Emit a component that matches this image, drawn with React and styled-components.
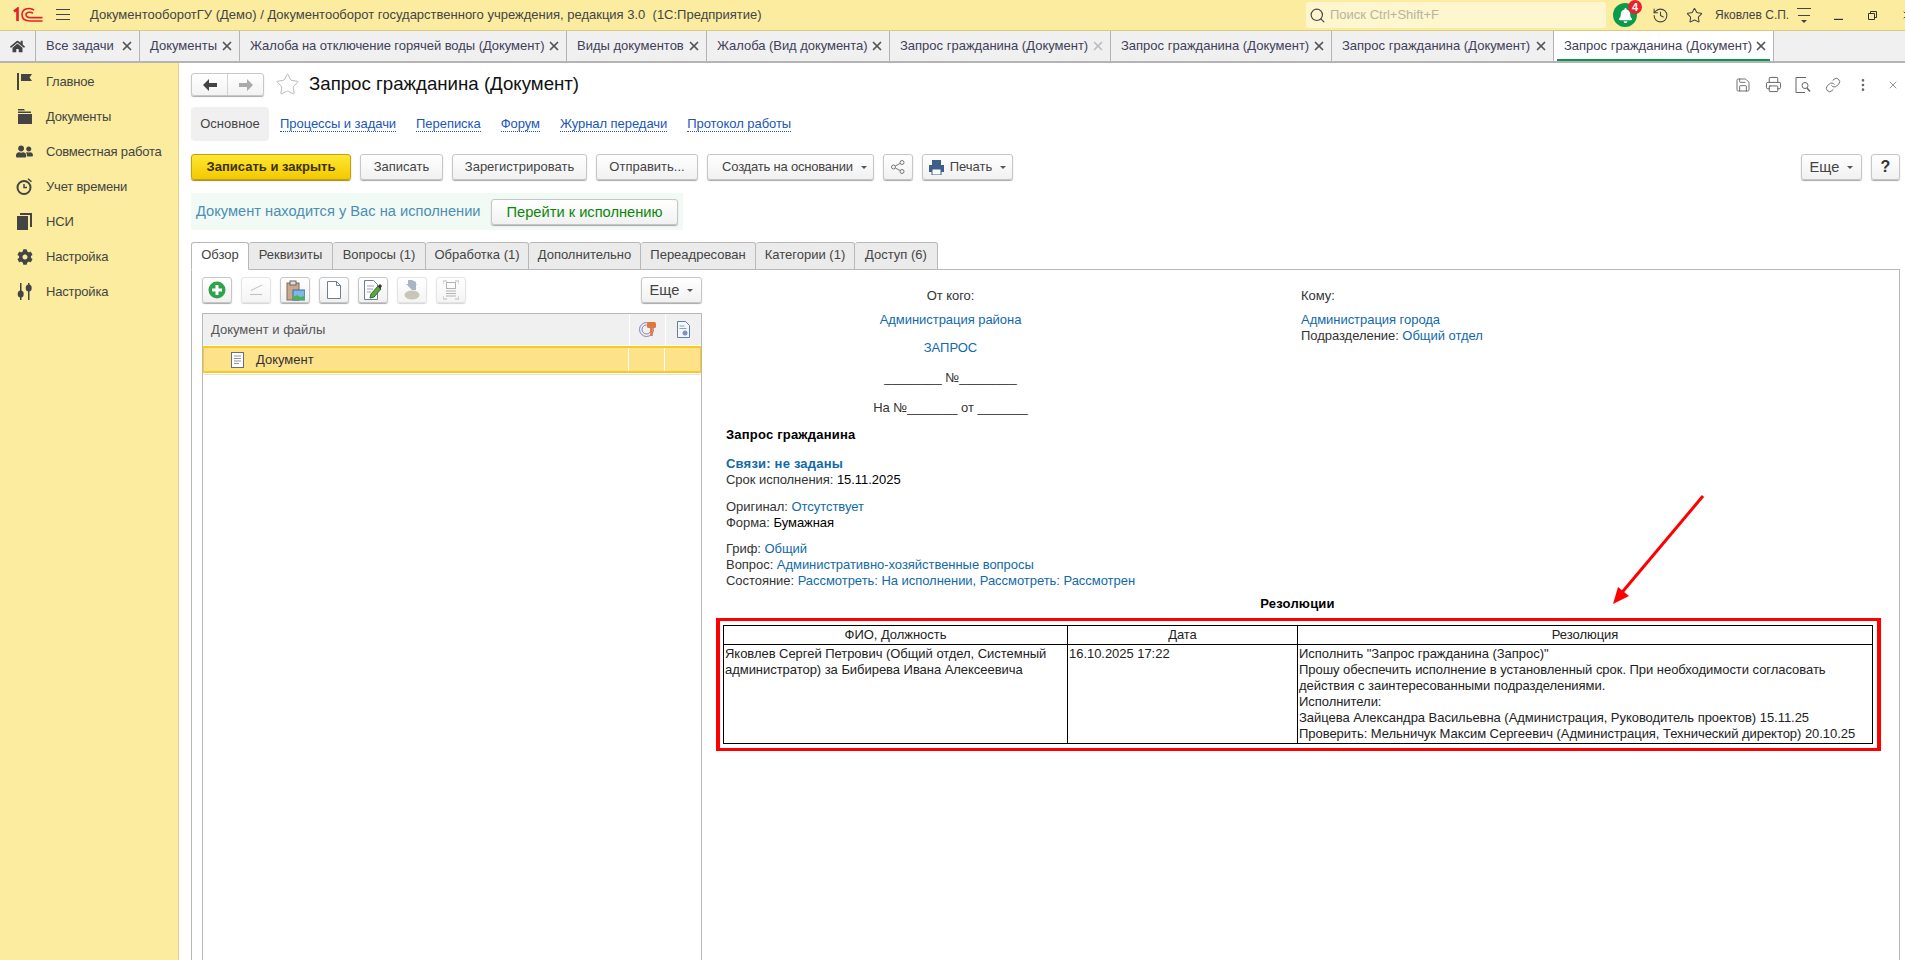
import React from "react";
import styled, { createGlobalStyle } from "styled-components";
import { Search, History, Star, Save, Printer, Link, MoreVertical, X } from "lucide-react";
import { FaHome, FaUserFriends, FaCog, FaBell } from "react-icons/fa";

const GlobalStyle = createGlobalStyle`
  html, body {
    margin: 0;
    height: 100%;
    overflow: hidden;
    background: #fff;
  }
  body {
    font-family: "Liberation Sans", Arial, sans-serif;
    font-size: 13px;
    line-height: 16px;
    color: #333;
  }
  * { box-sizing: border-box; }
`;

const Page = styled.div`
  width: 1905px;
  height: 960px;
  display: flex;
  flex-direction: column;
  overflow: hidden;
`;

/* title bar */
const TitleBar = styled.div`
  height: 31px;
  flex: none;
  display: flex;
  align-items: center;
  background: #fbec9f;
  border-bottom: 1px solid #d9cb83;
`;
const TitleSlot = styled.div`
  flex: none;
  display: flex;
  align-items: center;
  justify-content: center;
  margin-left: ${(p) => p.$ml}px;
  width: ${(p) => p.$w}px;
  color: #444;
`;
const AppTitle = styled.div`
  margin-left: 20px;
  width: 1216px;
  flex: none;
  white-space: pre;
  color: #444;
`;
const SearchBox = styled.div`
  flex: none;
  width: 300px;
  height: 26px;
  display: flex;
  align-items: center;
  gap: 4px;
  padding-left: 3px;
  background: #fdf6cf;
  border-radius: 3px;
  color: #b9b49c;
  svg { color: #444; }
`;
const BellCircle = styled.div`
  position: relative;
  width: 24px;
  height: 24px;
  border-radius: 50%;
  background: #0a9a4c;
  display: flex;
  align-items: center;
  justify-content: center;
  color: #fff;
`;
const BellBadge = styled.span`
  position: absolute;
  top: -3px;
  right: -5px;
  width: 14px;
  height: 14px;
  border-radius: 50%;
  background: #e9212c;
  color: #fff;
  font-size: 11px;
  font-weight: 700;
  line-height: 14px;
  text-align: center;
`;
const UserName = styled.div`
  margin-left: 12px;
  width: 68px;
  flex: none;
  font-size: 12px;
  white-space: nowrap;
  color: #444;
`;

/* open windows tabs */
const TabBar = styled.div`
  height: 32px;
  flex: none;
  display: flex;
  background: #f0f0f0;
  border-bottom: 2px solid #b4b4b4;
`;
const WindowTab = styled.div`
  flex: none;
  width: ${(p) => p.$w}px;
  display: flex;
  align-items: center;
  justify-content: space-between;
  padding: 0 5px 0 10px;
  position: relative;
  border-right: 1px solid #b4b4b4;
  white-space: nowrap;
  color: #40405a;
  background: ${(p) => (p.$active ? "#fff" : "transparent")};
  &::after {
    content: "";
    display: ${(p) => (p.$active ? "block" : "none")};
    position: absolute;
    left: 3px;
    right: 3px;
    bottom: 0;
    height: 2px;
    background: #0a9650;
  }
`;
const HomeTab = styled(WindowTab)`
  justify-content: center;
  padding: 0;
  color: #444;
`;
const TabTitle = styled.span`
  letter-spacing: ${(p) => (p.$long ? "-0.05px" : "0")};
`;
const TabClose = styled(X)`
  flex: none;
  color: ${(p) => (p.$dim ? "#bdbdbd" : "#555")};
`;

/* layout */
const Body = styled.div`
  flex: 1;
  min-height: 0;
  display: flex;
`;
const Sidebar = styled.nav`
  width: 179px;
  flex: none;
  padding-top: 1px;
  background: #fbec9f;
  border-right: 1px solid #e0d286;
`;
const SideItem = styled.div`
  height: 35px;
  display: flex;
  align-items: center;
  gap: 13px;
  padding-left: 16px;
  color: #444;
  letter-spacing: -0.2px;
  white-space: nowrap;
`;
const SideIcon = styled.span`
  width: 17px;
  height: 17px;
  display: flex;
  align-items: center;
  justify-content: center;
  color: #444;
`;
const Main = styled.main`
  flex: 1;
  min-width: 0;
  display: flex;
  flex-direction: column;
  padding: 10px 5px 0 12px;
`;

/* form head */
const FormHead = styled.div`
  height: 23px;
  flex: none;
  display: flex;
  align-items: center;
`;
const NavGroup = styled.div`
  width: 73px;
  height: 23px;
  display: flex;
  background: linear-gradient(#fff, #f3f3f3);
  border: 1px solid #c8c8c8;
  border-radius: 3px;
  box-shadow: 0 1px 1px #aaa;
`;
const NavButton = styled.div`
  flex: 1;
  display: flex;
  align-items: center;
  justify-content: center;
  color: ${(p) => (p.$off ? "#aaa" : "#444")};
  & + & { border-left: 1px solid #d4d4d4; }
`;
const FormTitle = styled.h1`
  margin: 0 0 2px 9px;
  font-size: 18.67px;
  font-weight: 400;
  line-height: 24px;
  color: #111;
  white-space: nowrap;
`;
const FormTools = styled.div`
  margin-left: auto;
  margin-right: -8px;
  display: flex;
  align-items: center;
  color: #666;
`;
const FormTool = styled.span`
  width: ${(p) => p.$w}px;
  display: flex;
  justify-content: center;
`;

/* sub navigation */
const SubNav = styled.div`
  height: 34px;
  margin-top: 11px;
  flex: none;
  display: flex;
  align-items: center;
  gap: 20px;
`;
const SubCurrent = styled.div`
  width: 78px;
  height: 34px;
  margin-right: -9px;
  display: flex;
  align-items: center;
  justify-content: center;
  background: #f0f0f0;
  border-radius: 4px;
  color: #444;
`;
const SubLink = styled.a`
  color: #1c55b8;
  border-bottom: 1px dotted #1c55b8;
  line-height: 14px;
  letter-spacing: -0.05px;
  white-space: nowrap;
`;

/* command bar */
const CommandBar = styled.div`
  height: 26px;
  margin-top: 13px;
  flex: none;
  display: flex;
  gap: 9px;
`;
const Button = styled.div`
  flex: none;
  width: ${(p) => p.$w}px;
  height: 26px;
  display: flex;
  align-items: center;
  justify-content: center;
  gap: 6px;
  background: linear-gradient(#fff, #f1f1f1);
  border: 1px solid #c6c6c6;
  border-radius: 3px;
  box-shadow: 0 1px 1px #a8a8a8;
  color: #444;
  white-space: nowrap;
  ${(p) => (p.$push ? "margin-left: auto;" : "")}
`;
const PrimaryButton = styled(Button)`
  background: linear-gradient(#ffe733, #f4c900);
  border-color: #c2a20c;
  box-shadow: 0 1px 1px #9c8a28;
  color: #3b3200;
  font-weight: 700;
`;
const TightButton = styled(Button)`
  padding-left: 8px;
  letter-spacing: -0.2px;
`;
const MoreButton = styled(Button)`
  font-size: 14.67px;
`;
const HelpButton = styled(Button)`
  font-size: 16px;
  font-weight: 700;
  color: #333;
`;
const Caret = styled.span`
  width: 0;
  height: 0;
  margin-left: 2px;
  border-left: 3px solid transparent;
  border-right: 3px solid transparent;
  border-top: 3px solid #555;
`;

/* info strip */
const InfoStrip = styled.div`
  width: 492px;
  height: 37px;
  margin-top: 13px;
  flex: none;
  display: flex;
  align-items: center;
  padding-left: 5px;
  background: #f2faf6;
`;
const InfoText = styled.span`
  width: 295px;
  flex: none;
  margin-top: -2px;
  font-size: 14.67px;
  color: #4b8fb3;
  white-space: nowrap;
`;
const GoButton = styled(Button)`
  height: 26px;
  font-size: 14.67px;
  color: #0a870a;
`;

/* form tabs */
const FormTabs = styled.div`
  height: 28px;
  margin-top: 12px;
  flex: none;
  display: flex;
  position: relative;
  z-index: 1;
  margin-bottom: -1px;
`;
const FormTab = styled.div`
  flex: none;
  width: ${(p) => p.$w}px;
  display: flex;
  align-items: center;
  justify-content: center;
  padding-bottom: 2px;
  color: #444;
  background: ${(p) => (p.$active ? "#fff" : "#ebebeb")};
  border: 1px solid #b8b8b8;
  border-left-width: ${(p) => (p.$active ? 1 : 0)}px;
  border-bottom-color: ${(p) => (p.$active ? "#fff" : "#b8b8b8")};
  border-radius: 3px 3px 0 0;
`;
const Panel = styled.div`
  flex: 1;
  min-height: 0;
  display: flex;
  border: 1px solid #b8b8b8;
  border-bottom: 0;
`;

/* left column */
const LeftColumn = styled.div`
  width: 510px;
  flex: none;
  display: flex;
  flex-direction: column;
  padding: 7px 0 0 10px;
`;
const Toolbar = styled.div`
  height: 26px;
  flex: none;
  display: flex;
  gap: 9px;
`;
const ToolButton = styled(Button)`
  width: 30px;
  ${(p) => (p.$off ? "opacity: .75; box-shadow: 0 1px 1px #c8c8c8; border-color: #dcdcdc;" : "")}
`;
const Grid = styled.div`
  flex: 1;
  margin-top: 10px;
  border: 1px solid #b8b8b8;
  border-bottom: 0;
`;
const GridRow = styled.div`
  display: grid;
  grid-template-columns: 1fr 36px 36px;
`;
const HeadCell = styled.div`
  height: 31px;
  display: flex;
  align-items: center;
  justify-content: ${(p) => (p.$icon ? "center" : "flex-start")};
  padding-left: ${(p) => (p.$icon ? 0 : 8)}px;
  background: #f0f0f0;
  color: #555;
  border-left: ${(p) => (p.$icon ? "1px solid #fff" : "0")};
`;
const SelectedRow = styled(GridRow)`
  height: 27px;
  margin-top: 1px;
  background: #fde28a;
  border: 2px solid #f8c91e;
  border-left-width: 1px;
  border-right-width: 1px;
`;
const SelectedCell = styled.div`
  display: flex;
  align-items: center;
  gap: 11px;
  padding-left: 27px;
  color: #333;
  & + & {
    padding: 0;
    border-left: 1px solid #fff;
  }
`;
const RowRule = styled.div`
  height: 1px;
  margin-top: 1px;
  background: #e4e4e4;
`;

/* printed document */
const DocView = styled.div`
  flex: 1;
  min-width: 0;
  padding: 18px 0 0 24px;
  color: #333;
  letter-spacing: -0.04px;
`;
const Addressing = styled.div`
  display: grid;
  grid-template-columns: 449px 1fr;
  column-gap: 126px;
`;
const FromBlock = styled.div`
  text-align: center;
`;
const Line = styled.div`
  margin-top: ${(p) => p.$mt || 0}px;
  white-space: pre;
`;
const Blue = styled.span`
  color: #116aa8;
`;
const Value = styled.span`
  color: #000;
`;
const BoldLine = styled(Line)`
  font-weight: 700;
  color: #000;
  letter-spacing: 0.2px;
`;
const DocHeading = styled(BoldLine)`
  text-align: center;
  width: 1149px;
  margin-left: -3px;
`;
const ResolutionFrame = styled.div`
  margin: 6px 18px 0 -10px;
  padding: 4px 4px 4px 3px;
  border: solid #f00;
  border-width: 3px 4px;
`;
const Table = styled.table`
  width: 100%;
  table-layout: fixed;
  border-collapse: collapse;
  th, td {
    border: 1px solid #000;
    padding: 1px;
    vertical-align: top;
    font-weight: 400;
    color: #222;
  }
`;
const ArrowMark = styled.svg`
  position: absolute;
  left: 1605px;
  top: 490px;
`;

/* drawn icons */
const Logo = () => (
  <svg width="30" height="16" viewBox="0 0 30 16" fill="none" stroke="#e4202a">
    <path d="M1 4.5 4.5 1.8V14" strokeWidth="2.6" />
    <path d="M21 3.2C18 .4 9 .6 9 7.5c0 5 4 6.5 8 6.5h12.5" strokeWidth="1.6" />
    <path d="M20 6.4c-2-1.8-7-1.6-7 1.4 0 2.4 2.5 2.8 5 2.8h11.5" strokeWidth="1.6" />
  </svg>
);
const Burger = () => (
  <svg width="14" height="12" viewBox="0 0 14 12" stroke="#444" strokeWidth="1">
    <path d="M0 .5h14M0 5.5h14M0 10.5h14" />
  </svg>
);
const MenuLines = () => (
  <svg width="14" height="15" viewBox="0 0 14 15">
    <path d="M0 .5h14M1 7.5h12" stroke="#444" />
    <path d="M4 12h6l-3 3z" fill="#444" />
  </svg>
);
const Minimize = () => (
  <svg width="9" height="9" viewBox="0 0 9 9"><path d="M0 8.5h9" stroke="#333" strokeWidth="1.4" /></svg>
);
const Restore = () => (
  <svg width="9" height="9" viewBox="0 0 9 9" fill="none" stroke="#333">
    <path d="M.5 2.5h6v6h-6zM2.5 2.5v-2h6v6h-2" />
  </svg>
);
const FlagIcon = () => (
  <svg width="15" height="17" viewBox="0 0 15 17" fill="#444">
    <rect x="0" width="2" height="17" />
    <path d="M4 1h11l-2.5 3.5L15 8H4z" />
  </svg>
);
const FolderIcon = () => (
  <svg width="15" height="15" viewBox="0 0 15 15" fill="#444">
    <path d="M1 0h6l1 1.5H1zM1 2.500h13V4H1zM1 5h14v10H1z" />
  </svg>
);
const StopwatchIcon = () => (
  <svg width="17" height="17" viewBox="0 0 17 17" fill="none" stroke="#444">
    <circle cx="8" cy="9.500" r="6.500" strokeWidth="2" />
    <path d="M8 6v3.500h3M12 .8l3.500 3" strokeWidth="1.500" />
  </svg>
);
const StackIcon = () => (
  <svg width="15" height="17" viewBox="0 0 15 17" fill="#444">
    <rect x="0" y="3" width="11" height="14" />
    <path d="M3 0h12v14h-2V2H3z" />
  </svg>
);
const SlidersIcon = () => (
  <svg width="15" height="17" viewBox="0 0 15 17" fill="#444">
    <rect x="3" width="1.500" height="17" />
    <rect x="11" width="1.500" height="17" />
    <ellipse cx="3.700" cy="11" rx="3" ry="3.500" />
    <ellipse cx="11.700" cy="5" rx="3" ry="3.500" />
  </svg>
);
const ArrowLeft = () => (
  <svg width="14" height="12" viewBox="0 0 14 12" fill="currentColor"><path d="M6 0v4h8v4H6v4L0 6z" /></svg>
);
const ArrowRight = () => (
  <svg width="14" height="12" viewBox="0 0 14 12" fill="currentColor"><path d="M8 0v4H0v4h8v4l6-6z" /></svg>
);
const ShareIcon = () => (
  <svg width="14" height="14" viewBox="0 0 14 14" fill="none" stroke="#777">
    <circle cx="2.500" cy="7" r="2" />
    <circle cx="11" cy="2.500" r="2" />
    <circle cx="11" cy="11.500" r="2" />
    <path d="M4.300 6 9.200 3.400M4.300 8l4.900 2.600" />
  </svg>
);
const PrintIcon = () => (
  <svg width="15" height="15" viewBox="0 0 15 15">
    <path d="M3 0h9v5H3zM0 5h15v7H0z" fill="#3d5f8a" />
    <path d="M3 9h9v6H3z" fill="#fff" stroke="#3d5f8a" />
  </svg>
);
const PreviewIcon = () => (
  <svg width="16" height="16" viewBox="0 0 16 16" fill="none" stroke="#666">
    <path d="M11 .5H1v15h9" />
    <circle cx="10" cy="8.500" r="3" />
    <path d="m12 11 3 3.500" strokeWidth="1.500" />
  </svg>
);
const AddIcon = () => (
  <svg width="18" height="18" viewBox="0 0 18 18">
    <circle cx="9" cy="9" r="8.500" fill="#2fa24a" />
    <path d="M9 4v10M4 9h10" stroke="#fff" strokeWidth="3" />
  </svg>
);
const LessIcon = () => (
  <svg width="14" height="12" viewBox="0 0 14 12" fill="none" stroke="#aaa">
    <path d="M13 1 2 6.500l0 0M1 10.500h12" />
  </svg>
);
const ClipIcon = () => (
  <svg width="19" height="21" viewBox="0 0 19 21">
    <rect x="1" y="3" width="12" height="17" fill="#c9a88c" stroke="#7d6a58" />
    <rect x="4" y="1" width="6" height="4" fill="#ddd" stroke="#666" />
    <rect x="7" y="10" width="12" height="10" fill="#7db8e8" stroke="#3d6d99" />
    <path d="M7 20v-3l4-2 3 2 5-1v4z" fill="#4fae58" />
  </svg>
);
const PageIcon = () => (
  <svg width="14" height="18" viewBox="0 0 14 18" fill="#fff" stroke="#6f7f92">
    <path d="M.5.500h9l4 4v13H.5z" />
    <path d="M9.500.500v4h4" fill="none" />
  </svg>
);
const EditIcon = () => (
  <svg width="18" height="20" viewBox="0 0 18 20">
    <path d="M.5.500h9l4 4v15H.5z" fill="#fff" stroke="#6f7f92" />
    <path d="M3 6h7M3 9h6M3 12h4" stroke="#9aa5b2" />
    <path d="m6 18 1-4 7-8 3 3-7 8z" fill="#59a83f" stroke="#2f6b22" />
    <path d="m14 6 2-2 2 2-2 3z" fill="#333" />
  </svg>
);
const StampIcon = () => (
  <svg width="16" height="20" viewBox="0 0 16 20">
    <ellipse cx="8" cy="15" rx="7.500" ry="4.500" fill="#b8b3a2" />
    <path d="M4 0h4l4 2v8H8L4 6z" fill="#8d9db0" />
    <path d="M2 4h11L8 9z" fill="#8d9db0" />
  </svg>
);
const ScanIcon = () => (
  <svg width="16" height="20" viewBox="0 0 16 20" fill="none" stroke="#999">
    <path d="M0 4V1h4M12 1h4v3M0 16v3h4M12 19h4v-3" stroke="#b99" />
    <rect x="3.500" y="2.500" width="9" height="6" />
    <path d="M3 11h10M3 13.500h10M3 16h10" />
  </svg>
);
const KeyColumnIcon = () => (
  <svg width="17" height="17" viewBox="0 0 17 17" fill="none">
    <circle cx="7.500" cy="8.500" r="7" stroke="#8a7fb8" />
    <circle cx="7.500" cy="8.500" r="4.500" stroke="#8a7fb8" />
    <rect x="8" y="1" width="9" height="6" rx="1.500" fill="#e2773a" />
    <path d="M12.500 6v9" stroke="#e2773a" strokeWidth="2.500" />
  </svg>
);
const SealColumnIcon = () => (
  <svg width="13" height="17" viewBox="0 0 13 17">
    <path d="M.5.500h8l4 4v12H.5z" fill="#f4f8fd" stroke="#5f7fa8" />
    <path d="M2.500 5h5M2.500 7.500h7" stroke="#8aa2c2" />
    <circle cx="8" cy="12" r="2.500" fill="#7f8fc8" />
  </svg>
);
const ListDocIcon = () => (
  <svg width="14" height="16" viewBox="0 0 14 16" fill="#fff" stroke="#66707c">
    <rect x=".5" y=".5" width="12" height="15" />
    <path d="M3 4h7M3 6.500h7M3 9h7M3 11.500h5" fill="none" stroke="#8d96a0" />
  </svg>
);

const windowTabs = [
  { title: "Все задачи", w: 104 },
  { title: "Документы", w: 100 },
  { title: "Жалоба на отключение горячей воды (Документ)", w: 327, long: true },
  { title: "Виды документов", w: 140 },
  { title: "Жалоба (Вид документа)", w: 183, long: true },
  { title: "Запрос гражданина (Документ)", w: 221, dim: true },
  { title: "Запрос гражданина (Документ)", w: 221 },
  { title: "Запрос гражданина (Документ)", w: 222 },
  { title: "Запрос гражданина (Документ)", w: 220, active: true },
];

const sideItems = [
  { title: "Главное", icon: <FlagIcon /> },
  { title: "Документы", icon: <FolderIcon /> },
  { title: "Совместная работа", icon: <FaUserFriends size={17} /> },
  { title: "Учет времени", icon: <StopwatchIcon /> },
  { title: "НСИ", icon: <StackIcon /> },
  { title: "Настройка", icon: <FaCog size={16} /> },
  { title: "Настройка", icon: <SlidersIcon /> },
];

const subLinks = ["Процессы и задачи", "Переписка", "Форум", "Журнал передачи", "Протокол работы"];

const formTabs = [
  { title: "Обзор", w: 58, active: true },
  { title: "Реквизиты", w: 84 },
  { title: "Вопросы (1)", w: 93 },
  { title: "Обработка (1)", w: 103 },
  { title: "Дополнительно", w: 112 },
  { title: "Переадресован", w: 115 },
  { title: "Категории (1)", w: 99 },
  { title: "Доступ (6)", w: 83 },
];

const App = () => (
  <Page>
    <GlobalStyle />
    <TitleBar>
      <TitleSlot $ml={13} $w={30}><Logo /></TitleSlot>
      <TitleSlot $ml={13} $w={14}><Burger /></TitleSlot>
      <AppTitle>ДокументооборотГУ (Демо) / Документооборот государственного учреждения, редакция 3.0  (1С:Предприятие)</AppTitle>
      <SearchBox><Search size={17} strokeWidth={1.6} />Поиск Ctrl+Shift+F</SearchBox>
      <TitleSlot $ml={7} $w={24}>
        <BellCircle>
          <FaBell size={15} />
          <BellBadge>4</BellBadge>
        </BellCircle>
      </TitleSlot>
      <TitleSlot $ml={15} $w={17}><History size={17} strokeWidth={1.5} /></TitleSlot>
      <TitleSlot $ml={17} $w={17}><Star size={17} strokeWidth={1.5} /></TitleSlot>
      <UserName>Яковлев С.П.</UserName>
      <TitleSlot $ml={14} $w={14}><MenuLines /></TitleSlot>
      <TitleSlot $ml={23} $w={9}><Minimize /></TitleSlot>
      <TitleSlot $ml={25} $w={9}><Restore /></TitleSlot>
      <TitleSlot $ml={24} $w={12}><X size={12} /></TitleSlot>
    </TitleBar>

    <TabBar>
      <HomeTab $w={36}><FaHome size={15} /></HomeTab>
      {windowTabs.map((tab, idx) => (
        <WindowTab key={idx} $w={tab.w} $active={tab.active}>
          <TabTitle $long={tab.long}>{tab.title}</TabTitle>
          <TabClose size={14} strokeWidth={3} $dim={tab.dim} />
        </WindowTab>
      ))}
    </TabBar>

    <Body>
      <Sidebar>
        {sideItems.map((item, idx) => (
          <SideItem key={idx}>
            <SideIcon>{item.icon}</SideIcon>
            {item.title}
          </SideItem>
        ))}
      </Sidebar>

      <Main>
        <FormHead>
          <NavGroup>
            <NavButton><ArrowLeft /></NavButton>
            <NavButton $off><ArrowRight /></NavButton>
          </NavGroup>
          <TitleSlot $ml={11} $w={25}><Star size={25} strokeWidth={0.9} color="#b5b5b5" /></TitleSlot>
          <FormTitle>Запрос гражданина (Документ)</FormTitle>
          <FormTools>
            <FormTool $w={30}><Save size={16} strokeWidth={1.4} /></FormTool>
            <FormTool $w={30}><Printer size={17} strokeWidth={1.4} /></FormTool>
            <FormTool $w={30}><PreviewIcon /></FormTool>
            <FormTool $w={30}><Link size={16} strokeWidth={1.4} /></FormTool>
            <FormTool $w={30}><MoreVertical size={16} strokeWidth={2} /></FormTool>
            <FormTool $w={30}><X size={12} strokeWidth={1.4} /></FormTool>
          </FormTools>
        </FormHead>

        <SubNav>
          <SubCurrent>Основное</SubCurrent>
          {subLinks.map((title) => (
            <SubLink key={title}>{title}</SubLink>
          ))}
        </SubNav>

        <CommandBar>
          <PrimaryButton $w={160}>Записать и закрыть</PrimaryButton>
          <Button $w={83}>Записать</Button>
          <Button $w={135}>Зарегистрировать</Button>
          <Button $w={102}>Отправить...</Button>
          <TightButton $w={167}>Создать на основании<Caret /></TightButton>
          <Button $w={30}><ShareIcon /></Button>
          <Button $w={91}><PrintIcon />Печать<Caret /></Button>
          <MoreButton $w={61} $push>Еще<Caret /></MoreButton>
          <HelpButton $w={29}>?</HelpButton>
        </CommandBar>

        <InfoStrip>
          <InfoText>Документ находится у Вас на исполнении</InfoText>
          <GoButton $w={187}>Перейти к исполнению</GoButton>
        </InfoStrip>

        <FormTabs>
          {formTabs.map((tab) => (
            <FormTab key={tab.title} $w={tab.w} $active={tab.active}>{tab.title}</FormTab>
          ))}
        </FormTabs>

        <Panel>
          <LeftColumn>
            <Toolbar>
              <ToolButton><AddIcon /></ToolButton>
              <ToolButton $off><LessIcon /></ToolButton>
              <ToolButton><ClipIcon /></ToolButton>
              <ToolButton><PageIcon /></ToolButton>
              <ToolButton><EditIcon /></ToolButton>
              <ToolButton $off><StampIcon /></ToolButton>
              <ToolButton $off><ScanIcon /></ToolButton>
              <MoreButton $w={61} $push>Еще<Caret /></MoreButton>
            </Toolbar>
            <Grid>
              <GridRow>
                <HeadCell>Документ и файлы</HeadCell>
                <HeadCell $icon><KeyColumnIcon /></HeadCell>
                <HeadCell $icon><SealColumnIcon /></HeadCell>
              </GridRow>
              <SelectedRow>
                <SelectedCell><ListDocIcon />Документ</SelectedCell>
                <SelectedCell />
                <SelectedCell />
              </SelectedRow>
              <RowRule />
            </Grid>
          </LeftColumn>

          <DocView>
            <Addressing>
              <FromBlock>
                <Line>От кого:</Line>
                <Line $mt={8}><Blue>Администрация района</Blue></Line>
                <Line $mt={12}><Blue>ЗАПРОС</Blue></Line>
                <Line $mt={14}>________ №________</Line>
                <Line $mt={14}>На №_______ от _______</Line>
              </FromBlock>
              <div>
                <Line>Кому:</Line>
                <Line $mt={8}><Blue>Администрация города</Blue></Line>
                <Line>Подразделение: <Blue>Общий отдел</Blue></Line>
              </div>
            </Addressing>
            <BoldLine $mt={11}>Запрос гражданина</BoldLine>
            <BoldLine $mt={13}><Blue>Связи: не заданы</Blue></BoldLine>
            <Line>Срок исполнения: <Value>15.11.2025</Value></Line>
            <Line $mt={11}>Оригинал: <Blue>Отсутствует</Blue></Line>
            <Line>Форма: <Value>Бумажная</Value></Line>
            <Line $mt={10}>Гриф: <Blue>Общий</Blue></Line>
            <Line>Вопрос: <Blue>Административно-хозяйственные вопросы</Blue></Line>
            <Line>Состояние: <Blue>Рассмотреть: На исполнении, Рассмотреть: Рассмотрен</Blue></Line>
            <DocHeading $mt={7}>Резолюции</DocHeading>
            <ResolutionFrame>
              <Table>
                <colgroup>
                  <col style={{ width: 344 }} />
                  <col style={{ width: 230 }} />
                  <col />
                </colgroup>
                <thead>
                  <tr>
                    <th>ФИО, Должность</th>
                    <th>Дата</th>
                    <th>Резолюция</th>
                  </tr>
                </thead>
                <tbody>
                  <tr>
                    <td>Яковлев Сергей Петрович (Общий отдел, Системный администратор) за Бибирева Ивана Алексеевича</td>
                    <td>16.10.2025 17:22</td>
                    <td>
                      Исполнить "Запрос гражданина (Запрос)"<br />
                      Прошу обеспечить исполнение в установленный срок. При необходимости согласовать действия с заинтересованными подразделениями.<br />
                      Исполнители:<br />
                      Зайцева Александра Васильевна (Администрация, Руководитель проектов) 15.11.25<br />
                      Проверить: Мельничук Максим Сергеевич (Администрация, Технический директор) 20.10.25
                    </td>
                  </tr>
                </tbody>
              </Table>
            </ResolutionFrame>
          </DocView>
        </Panel>
      </Main>
    </Body>

    <ArrowMark width="110" height="120" viewBox="0 0 110 120" fill="none">
      <path d="M98 6 14 106" stroke="#f00" strokeWidth="3" />
      <path d="M8 114 13 97 24 106z" fill="#f00" />
    </ArrowMark>
  </Page>
);

export default App;
